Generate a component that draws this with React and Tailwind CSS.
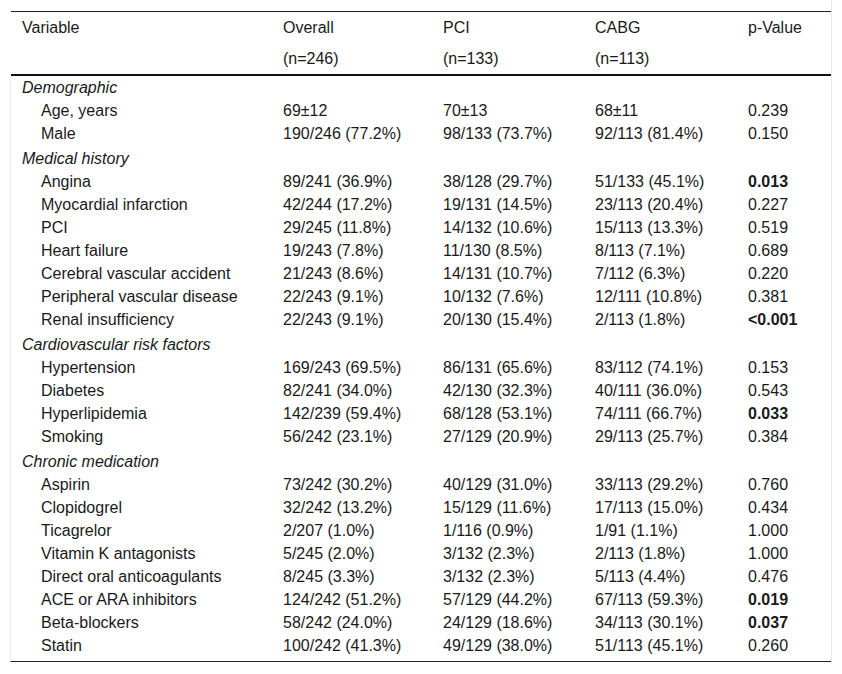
import React from 'react';

const sections = [
  {
    title: 'Demographic',
    rows: [
      ['Age, years', '69±12', '70±13', '68±11', '0.239'],
      ['Male', '190/246 (77.2%)', '98/133 (73.7%)', '92/113 (81.4%)', '0.150'],
    ],
  },
  {
    title: 'Medical history',
    rows: [
      ['Angina', '89/241 (36.9%)', '38/128 (29.7%)', '51/133 (45.1%)', '0.013', true],
      ['Myocardial infarction', '42/244 (17.2%)', '19/131 (14.5%)', '23/113 (20.4%)', '0.227'],
      ['PCI', '29/245 (11.8%)', '14/132 (10.6%)', '15/113 (13.3%)', '0.519'],
      ['Heart failure', '19/243 (7.8%)', '11/130 (8.5%)', '8/113 (7.1%)', '0.689'],
      ['Cerebral vascular accident', '21/243 (8.6%)', '14/131 (10.7%)', '7/112 (6.3%)', '0.220'],
      ['Peripheral vascular disease', '22/243 (9.1%)', '10/132 (7.6%)', '12/111 (10.8%)', '0.381'],
      ['Renal insufficiency', '22/243 (9.1%)', '20/130 (15.4%)', '2/113 (1.8%)', '<0.001', true],
    ],
  },
  {
    title: 'Cardiovascular risk factors',
    rows: [
      ['Hypertension', '169/243 (69.5%)', '86/131 (65.6%)', '83/112 (74.1%)', '0.153'],
      ['Diabetes', '82/241 (34.0%)', '42/130 (32.3%)', '40/111 (36.0%)', '0.543'],
      ['Hyperlipidemia', '142/239 (59.4%)', '68/128 (53.1%)', '74/111 (66.7%)', '0.033', true],
      ['Smoking', '56/242 (23.1%)', '27/129 (20.9%)', '29/113 (25.7%)', '0.384'],
    ],
  },
  {
    title: 'Chronic medication',
    rows: [
      ['Aspirin', '73/242 (30.2%)', '40/129 (31.0%)', '33/113 (29.2%)', '0.760'],
      ['Clopidogrel', '32/242 (13.2%)', '15/129 (11.6%)', '17/113 (15.0%)', '0.434'],
      ['Ticagrelor', '2/207 (1.0%)', '1/116 (0.9%)', '1/91 (1.1%)', '1.000'],
      ['Vitamin K antagonists', '5/245 (2.0%)', '3/132 (2.3%)', '2/113 (1.8%)', '1.000'],
      ['Direct oral anticoagulants', '8/245 (3.3%)', '3/132 (2.3%)', '5/113 (4.4%)', '0.476'],
      ['ACE or ARA inhibitors', '124/242 (51.2%)', '57/129 (44.2%)', '67/113 (59.3%)', '0.019', true],
      ['Beta-blockers', '58/242 (24.0%)', '24/129 (18.6%)', '34/113 (30.1%)', '0.037', true],
      ['Statin', '100/242 (41.3%)', '49/129 (38.0%)', '51/113 (45.1%)', '0.260'],
    ],
  },
];

const cols = 'grid grid-cols-[261px_160px_152px_153px_94px]';

export default function App() {
  return (
    <div className="bg-white min-h-screen font-[Liberation_Sans,Arial,sans-serif] text-[16px] text-[#1a1a1a]">
      <div className="pl-[11px] pt-[11px] w-[832px] border-r border-[#ececec]">
        {/* header */}
        <div className="border-t border-[#222] border-b-2 border-b-[#111]">
          <div className={`${cols} h-[31px] items-center`}>
            <div className="pl-[11px]">Variable</div>
            <div className="pl-[11px]">Overall</div>
            <div className="pl-[11px]">PCI</div>
            <div className="pl-[11px]">CABG</div>
            <div className="pl-[11px]">p-Value</div>
          </div>
          <div className={`${cols} h-[31px] items-center`}>
            <div />
            <div className="pl-[11px]">(n=246)</div>
            <div className="pl-[11px]">(n=133)</div>
            <div className="pl-[11px]">(n=113)</div>
            <div />
          </div>
        </div>
        {/* body */}
        <div className="border-l border-[#ececec] -ml-px pb-[4px] border-b border-b-[#222]">
          {sections.map((s, i) => (
            <div key={s.title}>
              <div className={`h-[23px] flex items-center pl-[11px] italic ${i > 0 ? 'mt-[2px]' : ''}`}>
                {s.title}
              </div>
              {s.rows.map((r) => (
                <div key={r[0]} className={`${cols} h-[23px] items-center`}>
                  <div className="pl-[30px]">{r[0]}</div>
                  <div className="pl-[11px]">{r[1]}</div>
                  <div className="pl-[11px]">{r[2]}</div>
                  <div className="pl-[11px]">{r[3]}</div>
                  <div className={`pl-[11px] ${r[5] ? 'font-bold' : ''}`}>{r[4]}</div>
                </div>
              ))}
            </div>
          ))}
        </div>
      </div>
    </div>
  );
}
